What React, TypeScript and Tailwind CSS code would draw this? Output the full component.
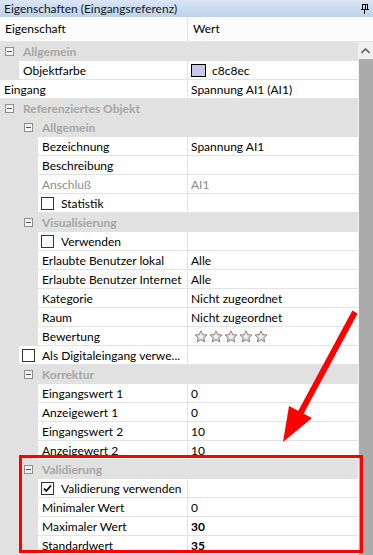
import React from "react";

type Row =
  | { kind: "cat"; level: 0 | 1; label: string }
  | {
      kind: "prop";
      indent: number;
      label: string;
      value?: string;
      checkbox?: boolean;
      checked?: boolean;
      disabled?: boolean;
      bold?: boolean;
      swatch?: string;
      stars?: boolean;
    };

const rows: Row[] = [
  { kind: "cat", level: 0, label: "Allgemein" },
  { kind: "prop", indent: 19, label: "Objektfarbe", value: "c8c8ec", swatch: "#c8c8ec" },
  { kind: "prop", indent: 0, label: "Eingang", value: "Spannung AI1 (AI1)" },
  { kind: "cat", level: 0, label: "Referenziertes Objekt" },
  { kind: "cat", level: 1, label: "Allgemein" },
  { kind: "prop", indent: 38, label: "Bezeichnung", value: "Spannung AI1" },
  { kind: "prop", indent: 38, label: "Beschreibung", value: "" },
  { kind: "prop", indent: 38, label: "Anschluß", value: "AI1", disabled: true },
  { kind: "prop", indent: 38, label: "Statistik", checkbox: true },
  { kind: "cat", level: 1, label: "Visualisierung" },
  { kind: "prop", indent: 38, label: "Verwenden", checkbox: true },
  { kind: "prop", indent: 38, label: "Erlaubte Benutzer lokal", value: "Alle" },
  { kind: "prop", indent: 38, label: "Erlaubte Benutzer Internet", value: "Alle" },
  { kind: "prop", indent: 38, label: "Kategorie", value: "Nicht zugeordnet" },
  { kind: "prop", indent: 38, label: "Raum", value: "Nicht zugeordnet" },
  { kind: "prop", indent: 38, label: "Bewertung", stars: true },
  { kind: "prop", indent: 19, label: "Als Digitaleingang verwe...", checkbox: true },
  { kind: "cat", level: 1, label: "Korrektur" },
  { kind: "prop", indent: 38, label: "Eingangswert 1", value: "0" },
  { kind: "prop", indent: 38, label: "Anzeigewert 1", value: "0" },
  { kind: "prop", indent: 38, label: "Eingangswert 2", value: "10" },
  { kind: "prop", indent: 38, label: "Anzeigewert 2", value: "10" },
  { kind: "cat", level: 1, label: "Validierung" },
  { kind: "prop", indent: 38, label: "Validierung verwenden", checkbox: true, checked: true },
  { kind: "prop", indent: 38, label: "Minimaler Wert", value: "0" },
  { kind: "prop", indent: 38, label: "Maximaler Wert", value: "30", bold: true },
  { kind: "prop", indent: 38, label: "Standardwert", value: "35", bold: true },
];

function MinusBox() {
  return (
    <svg width="9" height="9" viewBox="0 0 9 9" className="shrink-0">
      <rect x="0.5" y="0.5" width="8" height="8" fill="#f4f4f4" stroke="#8e8e8e" />
      <line x1="2" y1="4.5" x2="7" y2="4.5" stroke="#555" />
    </svg>
  );
}

function CheckBox({ checked }: { checked?: boolean }) {
  return (
    <svg width="13" height="13" viewBox="0 0 13 13" className="shrink-0">
      <rect x="0.5" y="0.5" width="12" height="12" fill="#fff" stroke="#333" />
      {checked && (
        <path d="M3 6.5 L5.3 9 L10 3.5" fill="none" stroke="#000" strokeWidth="1.8" />
      )}
    </svg>
  );
}

function Star() {
  return (
    <svg width="14" height="13" viewBox="0 0 14 13" className="shrink-0">
      <defs>
        <linearGradient id="sg" x1="0" y1="0" x2="0" y2="1">
          <stop offset="0" stopColor="#f2efe8" />
          <stop offset="1" stopColor="#c9c2b3" />
        </linearGradient>
      </defs>
      <polygon
        points="7,0.8 8.8,4.6 13,5 9.8,7.8 10.8,12 7,9.8 3.2,12 4.2,7.8 1,5 5.2,4.6"
        fill="url(#sg)"
        stroke="#8f8a80"
        strokeWidth="1"
        strokeLinejoin="round"
      />
      <polygon
        points="7,4 7.9,6 10,6.2 8.4,7.6 8.9,9.6 7,8.5 5.1,9.6 5.6,7.6 4,6.2 6.1,6"
        fill="#fff"
        opacity="0.7"
      />
    </svg>
  );
}

function RowView({ row }: { row: Row }) {
  if (row.kind === "cat") {
    const left = row.level === 0 ? 5 : 24;
    return (
      <div className="flex h-[19px] items-center bg-[#e1e1e1]">
        <div style={{ width: left }} className="shrink-0" />
        <MinusBox />
        <span className="ml-[9px] pt-px font-bold text-[#a6a6a6]">{row.label}</span>
      </div>
    );
  }
  return (
    <div className="flex h-[19px]">
      <div style={{ width: row.indent }} className="shrink-0 bg-[#e1e1e1]" />
      <div
        style={{ width: 188 - row.indent }}
        className="flex shrink-0 items-center overflow-hidden whitespace-nowrap border-b border-r border-[#e3e3e3] bg-white pl-[4px]"
      >
        {row.checkbox ? (
          <>
            <span className="ml-[-1px] flex">
              <CheckBox checked={row.checked} />
            </span>
            <span className="ml-[7px] pt-px text-black">{row.label}</span>
          </>
        ) : (
          <span className={"pt-px " + (row.disabled ? "text-[#8c8c8c]" : "text-black")}>
            {row.label}
          </span>
        )}
      </div>
      <div className="flex min-w-0 flex-1 items-center overflow-hidden whitespace-nowrap border-b border-[#e3e3e3] bg-white pl-[3px]">
        {row.swatch && (
          <span
            className="mr-[6px] h-[13px] w-[15px] shrink-0 border border-black"
            style={{ background: row.swatch }}
          />
        )}
        {row.stars ? (
          <span className="ml-[3px] flex gap-[1px]">
            <Star />
            <Star />
            <Star />
            <Star />
            <Star />
          </span>
        ) : (
          <span
            className={
              "pt-px " +
              (row.disabled ? "text-[#8c8c8c]" : "text-black") +
              (row.bold ? " font-bold" : "")
            }
          >
            {row.value}
          </span>
        )}
      </div>
    </div>
  );
}

export default function App() {
  return (
    <div
      className="relative h-[555px] w-[373px] overflow-hidden bg-white text-[12px] leading-none text-black"
      style={{ fontFamily: 'Lato, "Noto Sans", sans-serif' }}
    >
      {/* title bar */}
      <div className="flex h-[17px] items-center justify-between bg-gradient-to-b from-[#d9e5f4] to-[#bcd1ec] pl-[4px] pr-[4px]">
        <span className="text-[#1a1a1a]">Eigenschaften (Eingangsreferenz)</span>
        <svg width="8" height="10" viewBox="0 0 8 10">
          <rect x="1.5" y="0.5" width="5" height="5" fill="none" stroke="#000" />
          <line x1="4.5" y1="1" x2="4.5" y2="5" stroke="#000" />
          <line x1="0" y1="5.5" x2="8" y2="5.5" stroke="#000" />
          <line x1="3.5" y1="6" x2="3.5" y2="10" stroke="#000" />
        </svg>
      </div>
      {/* column header */}
      <div className="flex h-[25px] border-b border-[#e5e5e5] bg-[#fcfcfc]">
        <div className="flex w-[188px] items-center border-r border-[#e5e5e5] pl-[5px]">Eigenschaft</div>
        <div className="flex flex-1 items-center pl-[5px]">Wert</div>
      </div>
      {/* body */}
      <div className="flex">
        <div className="min-w-0 flex-1 bg-[#e1e1e1]">
          {rows.map((r, i) => (
            <RowView key={i} row={r} />
          ))}
        </div>
        <div className="flex w-[15px] shrink-0 flex-col bg-[#f0f0f0]">
          <div className="flex h-[17px] items-center justify-center">
            <svg width="9" height="6" viewBox="0 0 9 6">
              <path d="M0.5 5 L4.5 1 L8.5 5" fill="none" stroke="#606060" strokeWidth="1.6" />
            </svg>
          </div>
          <div className="ml-px flex-1 bg-[#ababab]" />
        </div>
      </div>
      {/* annotation overlay */}
      <svg
        className="pointer-events-none absolute left-0 top-0"
        width="373"
        height="555"
        viewBox="0 0 373 555"
      >
        <rect x="20.5" y="456.5" width="341" height="95" fill="none" stroke="#ff0000" strokeWidth="3" />
        <line x1="355" y1="312" x2="300" y2="414" stroke="#ff0000" strokeWidth="6" />
        <polygon points="283,442 289,406 312,418" fill="#ff0000" />
      </svg>
    </div>
  );
}
